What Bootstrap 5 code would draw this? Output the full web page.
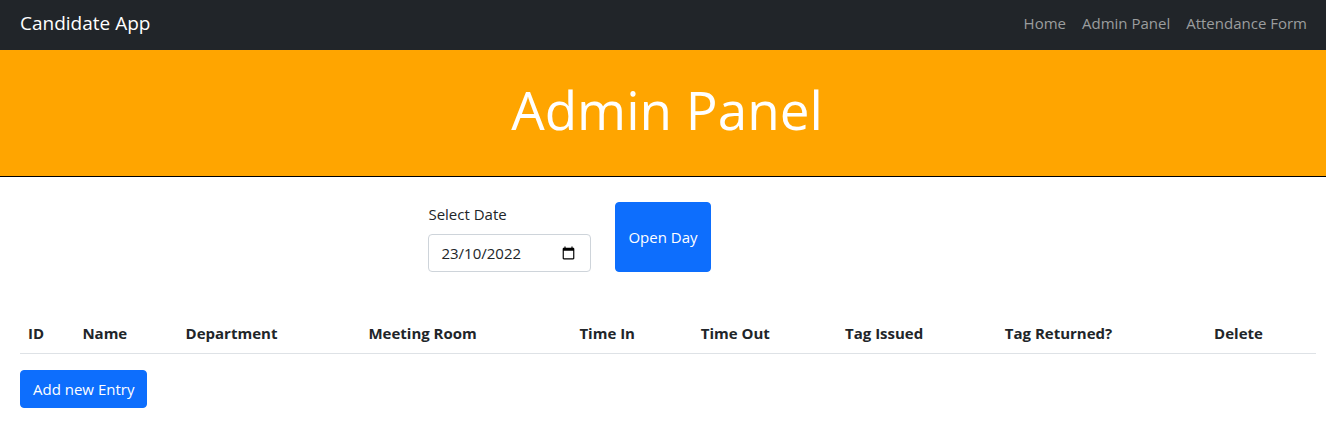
<!DOCTYPE html>
<html lang="en-GB">
<head>
<meta charset="utf-8">
<meta name="viewport" content="width=device-width, initial-scale=1">
<title>Candidate App</title>
<link href="https://cdn.jsdelivr.net/npm/bootstrap@5.3.0/dist/css/bootstrap.min.css" rel="stylesheet">
<style>
body{font-family:"Open Sans","Noto Sans",sans-serif;font-size:15px;line-height:24px}
.site-nav{padding:3px 11px 7px 20px}
.site-nav .navbar-brand{font-size:19px}
.site-nav .nav-link{color:#9b9d9e}
.hero{background:orange;border-bottom:1px solid #000;padding:28px 0 34px 8px}
.hero h1{font-size:53px;font-weight:400;line-height:64px}
.day-form{padding:25px 0 41px}
.date-field{width:163px}
.form-control,.btn{font-size:15px;line-height:24px;border-radius:4px}
.form-control{border-color:#ced4da}
/* day / month / year order, whatever the browser's locale */
.date-field ::-webkit-datetime-edit-fields-wrapper{display:grid;grid-template-columns:repeat(5,max-content)}
.date-field ::-webkit-datetime-edit-day-field{grid-area:1/1}
.date-field ::-webkit-datetime-edit-month-field{grid-area:1/3}
.date-field ::-webkit-datetime-edit-year-field{grid-area:1/5}
.date-field ::-webkit-datetime-edit-text{grid-row:1}
.entries-area{padding:0 10px 28px 20px}
.entries th{white-space:nowrap}
</style>
</head>
<body>
<nav class="navbar navbar-expand navbar-dark bg-dark site-nav">
<div class="container-fluid p-0">
<a class="navbar-brand py-0" href="#">Candidate App</a>
<ul class="navbar-nav">
<li class="nav-item"><a class="nav-link" href="#">Home</a></li>
<li class="nav-item"><a class="nav-link" href="#">Admin Panel</a></li>
<li class="nav-item"><a class="nav-link" href="#">Attendance Form</a></li>
</ul>
</div>
</nav>
<header class="hero text-center text-white">
<h1 class="mb-0">Admin Panel</h1>
</header>
<main>
<form class="day-form d-flex justify-content-center gap-4">
<div class="date-field"><label class="form-label" for="day">Select Date</label>
<input class="form-control" type="date" id="day" value="2022-10-23"></div>
<button class="btn btn-primary" type="button">Open Day</button>
<div class="date-field"></div>
</form>
<div class="entries-area">
<table class="table entries"><thead><tr><th scope="col">ID</th><th scope="col">Name</th><th scope="col">Department</th><th scope="col">Meeting Room</th><th scope="col">Time In</th><th scope="col">Time Out</th><th scope="col">Tag Issued</th><th scope="col">Tag Returned?</th><th scope="col">Delete</th></tr></thead></table>
<button class="btn btn-primary" type="button">Add new Entry</button>
</div>
</main>
<script src="https://cdn.jsdelivr.net/npm/bootstrap@5.3.0/dist/js/bootstrap.bundle.min.js"></script>
</body>
</html>
